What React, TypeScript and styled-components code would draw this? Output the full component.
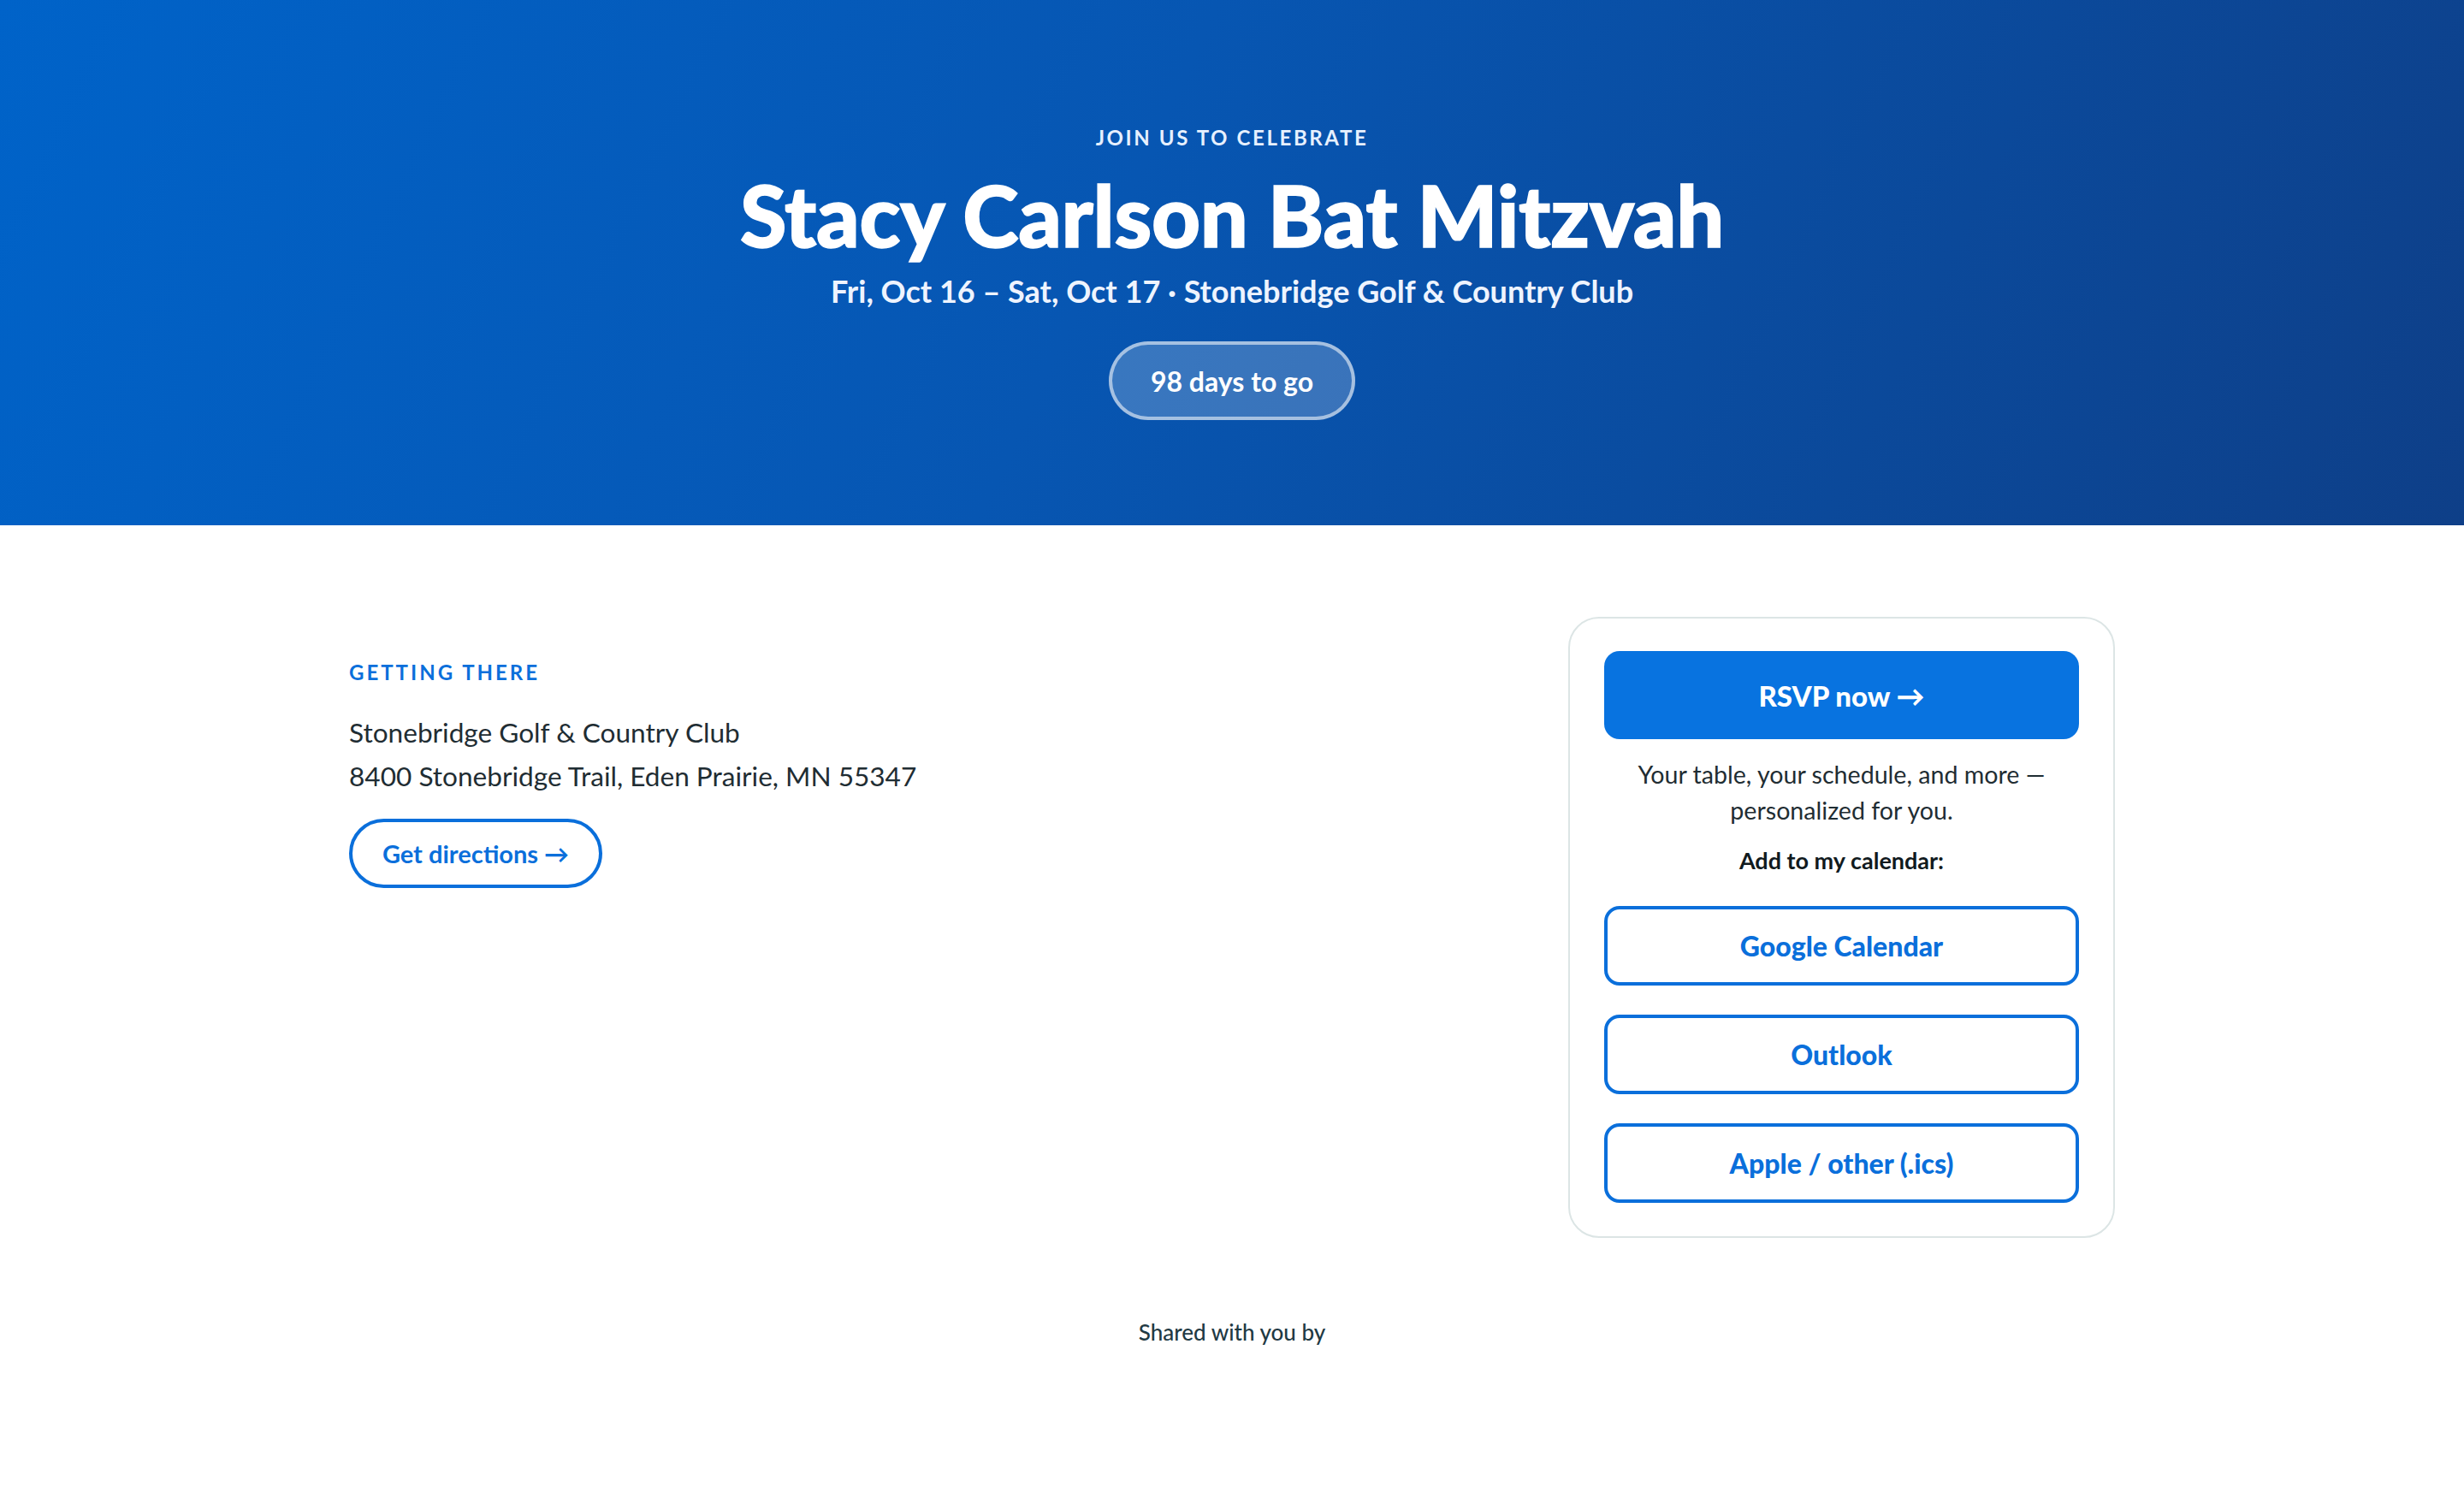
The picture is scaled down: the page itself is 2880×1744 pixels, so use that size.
import React from 'react';
import styled, { createGlobalStyle } from 'styled-components';

const GlobalStyle = createGlobalStyle`
  * { box-sizing: border-box; }
  html, body { margin: 0; padding: 0; background: #ffffff; }
  body {
    font-family: Lato, "Noto Sans", "Liberation Sans", sans-serif;
    color: #1f2d33;
  }
`;

const colors = {
  blue: '#0a6fdb',
  rsvp: '#0873e0',
  text: '#1f2d33',
  border: '#dce5e5',
};

const Hero = styled.header`
  display: flex;
  flex-direction: column;
  align-items: center;
  padding: 146px 40px 123px;
  background: linear-gradient(115deg, #0063c9 0%, #0756b2 45%, #0e3f88 100%);
  color: #ffffff;
  text-align: center;
`;

const Eyebrow = styled.div`
  font-size: 24px;
  line-height: 30px;
  font-weight: 700;
  letter-spacing: 2.6px;
  text-transform: uppercase;
  color: #e6f0ff;
`;

const Title = styled.h1`
  margin: 24px 0 0;
  font-size: 99px;
  line-height: 102px;
  font-weight: 900;
  letter-spacing: -0.3px;
  -webkit-text-stroke: 1.5px #ffffff;
`;

const Subtitle = styled.div`
  margin-top: 16px;
  font-size: 36px;
  line-height: 44px;
  font-weight: 700;
  color: #eef4ff;
`;

const Countdown = styled.div`
  margin-top: 37px;
  display: inline-flex;
  align-items: center;
  justify-content: center;
  width: 288px;
  height: 92px;
  border-radius: 46px;
  border: 4px solid rgba(255, 255, 255, 0.55);
  background: rgba(255, 255, 255, 0.2);
  font-size: 32px;
  font-weight: 700;
`;

const Main = styled.main`
  max-width: 2064px;
  margin: 0 auto;
  padding: 107px 0 0;
  display: grid;
  grid-template-columns: 1fr 639px;
  gap: 60px;
  align-items: start;
`;

const Section = styled.section`
  padding-top: 50px;
`;

const Label = styled.div`
  font-size: 24px;
  line-height: 30px;
  font-weight: 700;
  letter-spacing: 3px;
  text-transform: uppercase;
  color: ${colors.blue};
`;

const Address = styled.div`
  margin-top: 30px;
  font-size: 31.6px;
  line-height: 51px;
  color: ${colors.text};
`;

const PillLink = styled.a`
  margin-top: 24px;
  display: inline-flex;
  align-items: center;
  justify-content: center;
  width: 296px;
  height: 81px;
  border-radius: 41px;
  border: 4px solid ${colors.blue};
  color: ${colors.blue};
  font-size: 29px;
  font-weight: 700;
  text-decoration: none;
`;

const Card = styled.aside`
  display: flex;
  flex-direction: column;
  align-items: stretch;
  padding: 38px 40px 39px;
  border: 2px solid ${colors.border};
  border-radius: 36px;
  text-align: center;
`;

const PrimaryButton = styled.a`
  display: flex;
  align-items: center;
  justify-content: center;
  height: 103px;
  border-radius: 18px;
  background: ${colors.rsvp};
  color: #ffffff;
  font-size: 33px;
  font-weight: 900;
  text-decoration: none;
`;

const Note = styled.p`
  margin: 20px 0 0;
  font-size: 28.6px;
  line-height: 42px;
  color: ${colors.text};
`;

const CalendarLabel = styled.div`
  margin-top: 20px;
  font-size: 27px;
  line-height: 36px;
  font-weight: 700;
  color: #111a1e;
`;

const CalendarList = styled.div`
  margin-top: 35px;
  display: flex;
  flex-direction: column;
  gap: 34px;
`;

const OutlineButton = styled.a`
  display: flex;
  align-items: center;
  justify-content: center;
  height: 93px;
  border-radius: 18px;
  border: 4px solid ${colors.blue};
  color: ${colors.blue};
  font-size: 32px;
  font-weight: 900;
  text-decoration: none;
`;

const Footer = styled.footer`
  padding: 94px 0 120px;
  text-align: center;
  font-size: 26px;
  line-height: 32px;
  font-weight: 500;
  color: #1f3a44;
`;

const calendars = ['Google Calendar', 'Outlook', 'Apple / other (.ics)'];

export default function App(): JSX.Element {
  return (
    <>
      <GlobalStyle />
      <Hero>
        <Eyebrow>Join us to celebrate</Eyebrow>
        <Title>Stacy Carlson Bat Mitzvah</Title>
        <Subtitle>Fri, Oct 16 – Sat, Oct 17 · Stonebridge Golf &amp; Country Club</Subtitle>
        <Countdown>98 days to go</Countdown>
      </Hero>
      <Main>
        <Section>
          <Label>Getting there</Label>
          <Address>
            Stonebridge Golf &amp; Country Club
            <br />
            8400 Stonebridge Trail, Eden Prairie, MN 55347
          </Address>
          <PillLink href="#">Get directions →</PillLink>
        </Section>
        <Card>
          <PrimaryButton href="#">RSVP now →</PrimaryButton>
          <Note>Your table, your schedule, and more — personalized for you.</Note>
          <CalendarLabel>Add to my calendar:</CalendarLabel>
          <CalendarList>
            {calendars.map((c) => (
              <OutlineButton key={c} href="#">{c}</OutlineButton>
            ))}
          </CalendarList>
        </Card>
      </Main>
      <Footer>Shared with you by</Footer>
    </>
  );
}
